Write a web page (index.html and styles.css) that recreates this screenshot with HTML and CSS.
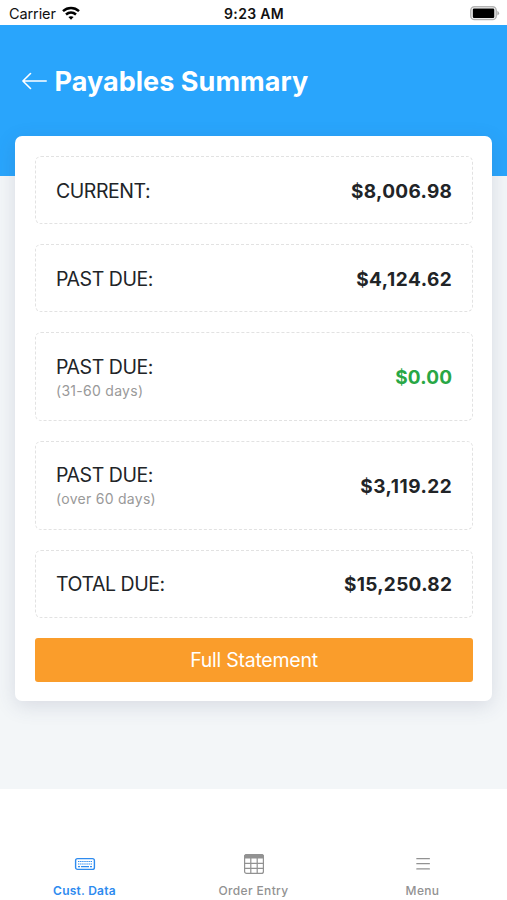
FILE: index.html
```html
<!DOCTYPE html>
<html lang="en">
<head>
<meta charset="utf-8">
<meta name="viewport" content="width=device-width, initial-scale=1">
<title>Payables Summary</title>
<link rel="stylesheet" href="styles.css">
</head>
<body>
<div class="status">
  <div class="carrier"><span>Carrier</span>
    <svg width="18" height="14" viewBox="0 0 18 14" fill="none" stroke="#000" stroke-width="2.5"><path d="M1 5.1C5.7.9 12.3.9 17 5.1"/><path d="M4 8.5c3-2.6 7-2.6 10 0"/><path d="M6.4 11.1C7.9 9.8 10.1 9.8 11.6 11.1L9 13.8z" fill="#000" stroke="none"/></svg>
  </div>
  <time class="time">9:23 AM</time>
  <svg class="battery" width="30" height="15" viewBox="0 0 30 15"><rect x=".8" y=".8" width="25.4" height="12.8" rx="3.7" fill="#fff" stroke="#b4b4b4" stroke-width="1.5"/><rect x="2.8" y="2.5" width="21.5" height="9.5" rx="1.2"/><path d="M27.4 4.8q3.4 2.4 0 4.8z" fill="#aaa"/></svg>
</div>
<main class="page">
  <header class="header">
    <svg class="back" width="26" height="18" viewBox="0 0 26 18" fill="none" stroke="#fff" stroke-width="1.6" stroke-linecap="round" stroke-linejoin="round"><path d="M24.2 9H.9M8.5 1.5L.9 9l7.6 7.5"/></svg>
    <h1 class="title">Payables Summary</h1>
  </header>
  <section class="card">
    <div class="row"><div class="label">CURRENT:</div><div class="amount">$8,006.98</div></div>
    <div class="row"><div class="label">PAST DUE:</div><div class="amount wide">$4,124.62</div></div>
    <div class="row tall"><div class="label">PAST DUE:<small class="note">(31-60 days)</small></div><div class="amount clear">$0.00</div></div>
    <div class="row tall"><div class="label">PAST DUE:<small class="note">(over 60 days)</small></div><div class="amount wide">$3,119.22</div></div>
    <div class="row"><div class="label">TOTAL DUE:</div><div class="amount">$15,250.82</div></div>
    <button class="button">Full Statement</button>
  </section>
</main>
<nav class="tabs">
  <a class="tab active">
    <svg width="22" height="22" viewBox="0 0 22 22" fill="none" stroke="currentColor"><rect x="1.6" y="5.6" width="18.8" height="10.8" rx="2" stroke-width="1.4"/><path d="M4 8.5h14M4 11h14" stroke-width="1.1" stroke-dasharray="1.4 .7"/><path d="M4 13.6h2M7 13.6h8M16 13.6h2" stroke-width="1.1"/></svg>
    <span>Cust. Data</span>
  </a>
  <a class="tab">
    <svg width="22" height="22" viewBox="0 0 22 22" fill="none" stroke="currentColor" stroke-width="1.2"><rect x="1.6" y="1.6" width="18.8" height="18.8" rx="2"/><path d="M1.6 5V3.6a2 2 0 0 1 2-2h14.8a2 2 0 0 1 2 2V5z" fill="currentColor"/><path d="M1.6 10.4h18.8M1.6 15.4h18.8M7.8 5v15.4M14.2 5v15.4"/></svg>
    <span>Order Entry</span>
  </a>
  <a class="tab">
    <svg width="22" height="22" viewBox="0 0 22 22" fill="none" stroke="currentColor" stroke-width="1.2" stroke-linecap="round"><path d="M4.8 5.7h12.6M4.8 10.7h12.6M4.8 15.9h12.6"/></svg>
    <span>Menu</span>
  </a>
</nav>
</body>
</html>
```
FILE: styles.css
```css
* { box-sizing: border-box; }
body {
  margin: 0;
  height: 900px;
  display: flex;
  flex-direction: column;
  background: #fff;
  color: #212427;
  font-family: Inter, "Liberation Sans", sans-serif;
  overflow: hidden;
}
.status {
  height: 25px;
  flex: none;
  padding: 2px 7px 0 9px;
  display: grid;
  grid-template-columns: 1fr auto 1fr;
  align-items: center;
  font-size: 14px;
  color: #111;
}
.carrier { display: flex; align-items: center; gap: 6px; font-size: 14.5px; letter-spacing: -.1px; }
.carrier svg { margin-top: -2px; }
.time { font-weight: 600; letter-spacing: .3px; margin-right: 1px; }
.battery { justify-self: end; margin-top: -1px; }
.page {
  height: 764px;
  flex: none;
  background: #f3f6f8;
}
.header {
  height: 151px;
  padding: 39px 22px 0;
  display: flex;
  align-items: flex-start;
  gap: 6.5px;
  background: #29a5fc;
  color: #fff;
}
.back { margin-top: 8px; }
.title { margin: 0; font-size: 27px; line-height: 36px; font-weight: 700; letter-spacing: .04px; white-space: nowrap; }
.card {
  width: 477px;
  height: 565px;
  margin: -39.6px 0 0 15px;
  padding: 19.8px 19px 0 20px;
  display: flex;
  flex-direction: column;
  gap: 20px;
  border-radius: 7px;
  background: #fff;
  box-shadow: 0 5px 20px rgba(60, 70, 110, .15);
  position: relative;
}
.row {
  height: 68px;
  padding: 1px 20px 0;
  display: flex;
  flex: none;
  align-items: center;
  justify-content: space-between;
  border: 1px dashed #e2e2e2;
  border-radius: 6px;
}
.row.tall { height: 88.7px; }
.label { font-size: 19.5px; line-height: 26px; letter-spacing: -.45px; }
.note { display: block; font-size: 14px; line-height: 21px; letter-spacing: .28px; color: #999; }
.amount { padding-top: 2px; font-size: 19px; line-height: 26px; font-weight: 700; letter-spacing: .32px; margin-right: -.3px; font-feature-settings: "calt" 0; }
.wide { letter-spacing: .52px; }
.clear { color: #28a745; letter-spacing: .2px; }
.button {
  height: 44px;
  flex: none;
  padding: 0;
  border: 0;
  border-radius: 3px;
  background: #fa9d2b;
  color: #fff;
  font: 400 19.5px/44px Inter, "Liberation Sans", sans-serif;
  letter-spacing: -.25px;
}
.tabs {
  height: 111px;
  flex: none;
  display: grid;
  grid-template-columns: repeat(3, 1fr);
}
.tab {
  padding-top: 63.5px;
  display: flex;
  flex-direction: column;
  align-items: center;
  gap: 8.5px;
  font-size: 12px;
  line-height: 16px;
  font-weight: 500;
  letter-spacing: .35px;
  color: #929292;
}
.tab.active { color: #2e8bef; font-weight: 600; letter-spacing: .25px; }
```
